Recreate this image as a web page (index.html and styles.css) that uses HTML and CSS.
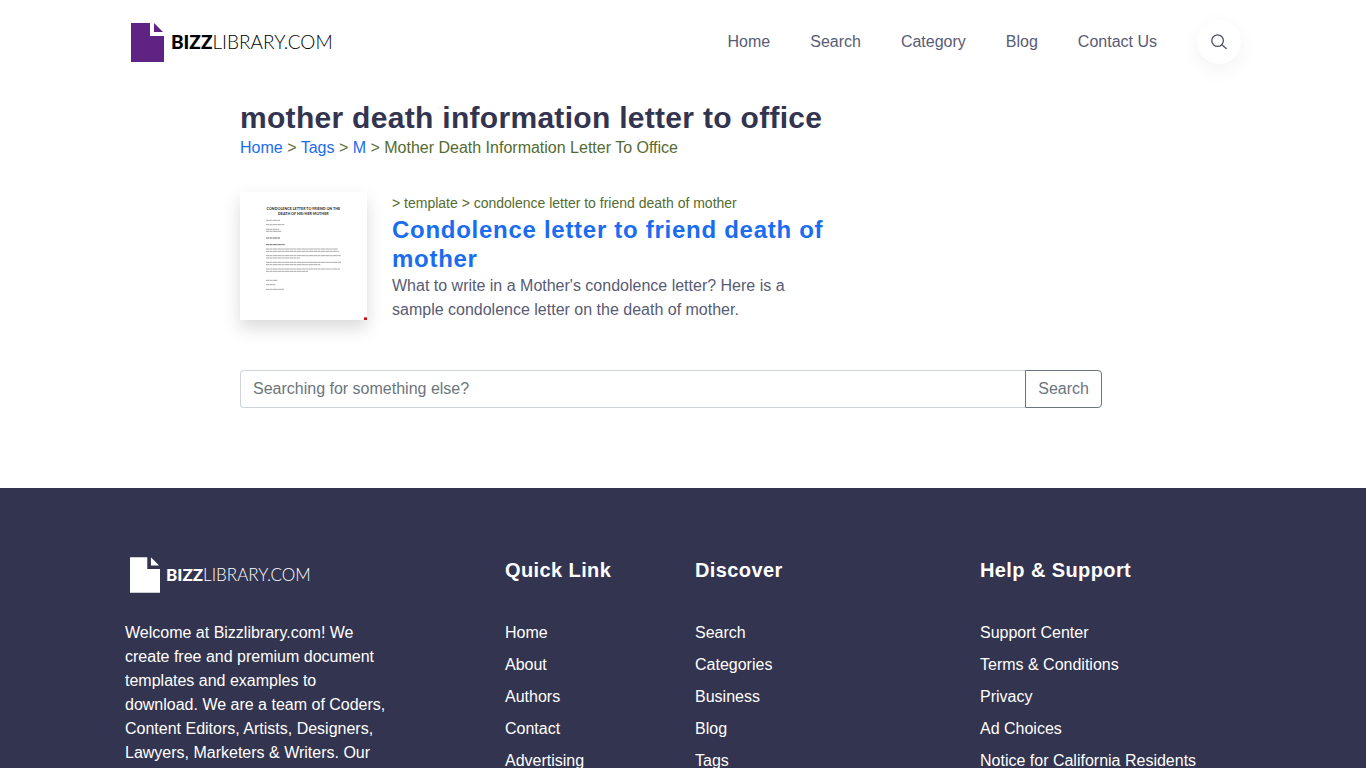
FILE: index.html
```
<!DOCTYPE html>
<html lang="en">
<head>
  <meta charset="UTF-8" />
  <meta name="viewport" content="width=device-width, initial-scale=1.0"/>
  <title>mother death information letter to office</title>
  <link rel="stylesheet" href="styles.css">
</head>
<body>
  <header class="container header">
    <a class="logo" href="#">
      <svg class="logo-icon" viewBox="0 0 33 39" aria-hidden="true">
        <path d="M0 0H19V13H33V39H0Z" fill="currentColor"/>
        <path d="M23 0L32 9H23Z" fill="currentColor"/>
      </svg>
      <span class="logo-text"><b>BIZZ</b>LIBRARY.COM</span>
    </a>
    <nav class="nav">
      <a href="#">Home</a>
      <a href="#">Search</a>
      <a href="#">Category</a>
      <a href="#">Blog</a>
      <a href="#">Contact Us</a>
      <button class="search-toggle" type="button" aria-label="Open search">
        <svg width="16" height="16" viewBox="0 0 16 16" fill="none" stroke="currentColor" stroke-width="1.3" stroke-linecap="round" aria-hidden="true">
          <circle cx="6.6" cy="6.6" r="5.8"/>
          <path d="M10.8 10.8L15.2 14.6"/>
        </svg>
      </button>
    </nav>
  </header>

  <main class="main">
    <h1>mother death information letter to office</h1>
    <div class="breadcrumb">
      <a href="#">Home</a> &gt; <a href="#">Tags</a> &gt; <a href="#">M</a> &gt; Mother Death Information Letter To Office
    </div>

    <article class="result">
      <a class="thumb" href="#" aria-label="Condolence letter to friend death of mother">
        <svg viewBox="0 0 381 384" aria-hidden="true">
          <g class="thumb-title">
            <text x="190" y="53">CONDOLENCE LETTER TO FRIEND ON THE</text>
            <text x="190" y="70">DEATH OF HIS/HER MOTHER</text>
          </g>
          <g class="thumb-lines">
            <path d="M78 85h42M78 98h56M78 112h40M78 118h46"/>
            <path class="dark" d="M78 138h42M78 158h58"/>
            <path d="M78 171h216M78 178h220M78 191h224M78 198h102M78 211h225M78 218h163M78 231h222M78 238h126"/>
            <path d="M78 265h34M78 278h28M78 292h54"/>
          </g>
          <path d="M372 376h9v8h-9z" fill="#c8141e"/>
        </svg>
      </a>
      <div class="result-text">
        <div class="result-path">&gt; template &gt; condolence letter to friend death of mother</div>
        <h2><a href="#">Condolence letter to friend death of mother</a></h2>
        <p>What to write in a Mother's condolence letter? Here is a sample condolence letter on the death of mother.</p>
      </div>
    </article>

    <form class="search-form">
      <input type="text" placeholder="Searching for something else?" aria-label="Searching for something else?">
      <button type="submit">Search</button>
    </form>
  </main>

  <footer>
    <div class="container footer-row">
      <div class="about">
        <a class="logo logo-light" href="#">
          <svg class="logo-icon" viewBox="0 0 33 39" aria-hidden="true">
            <path d="M0 0H19V13H33V39H0Z" fill="currentColor"/>
            <path d="M23 0L32 9H23Z" fill="currentColor"/>
          </svg>
          <span class="logo-text"><b>BIZZ</b>LIBRARY.COM</span>
        </a>
        <p>Welcome at Bizzlibrary.com! We create free and premium document templates and examples to download. We are a team of Coders, Content Editors, Artists, Designers, Lawyers, Marketers &amp; Writers. Our</p>
      </div>
      <div>
        <h5>Quick Link</h5>
        <ul>
          <li><a href="#">Home</a></li>
          <li><a href="#">About</a></li>
          <li><a href="#">Authors</a></li>
          <li><a href="#">Contact</a></li>
          <li><a href="#">Advertising</a></li>
        </ul>
      </div>
      <div>
        <h5>Discover</h5>
        <ul>
          <li><a href="#">Search</a></li>
          <li><a href="#">Categories</a></li>
          <li><a href="#">Business</a></li>
          <li><a href="#">Blog</a></li>
          <li><a href="#">Tags</a></li>
        </ul>
      </div>
      <div>
        <h5>Help &amp; Support</h5>
        <ul>
          <li><a href="#">Support Center</a></li>
          <li><a href="#">Terms &amp; Conditions</a></li>
          <li><a href="#">Privacy</a></li>
          <li><a href="#">Ad Choices</a></li>
          <li><a href="#">Notice for California Residents</a></li>
        </ul>
      </div>
    </div>
  </footer>
</body>
</html>
```

FILE: styles.css
```
* {
  margin: 0;
  padding: 0;
  box-sizing: border-box;
}

body {
  font-family: "Liberation Sans", Arial, sans-serif;
  font-size: 16px;
  line-height: 24px;
  color: #585b75;
  background-color: #fff;
}

a {
  color: #1a6cf0;
  text-decoration: none;
}

h1, h2, h5 {
  font-weight: 700;
}

.container {
  max-width: 1140px;
  margin: 0 auto;
  padding: 0 12px;
}

/* header */
.header {
  display: flex;
  justify-content: space-between;
  align-items: center;
  height: 84px;
}

.logo {
  display: flex;
  align-items: center;
  gap: 7px;
  padding-left: 6px;
  color: #000;
}

.logo-icon {
  width: 33px;
  height: 39px;
  color: #5f2383;
}

.logo-text {
  font-family: Lato, sans-serif;
  font-size: 19px;
  font-weight: 300;
}

.logo-text b {
  font-weight: 900;
}

.nav {
  display: flex;
  align-items: center;
  gap: 40px;
}

.nav a {
  color: #585b75;
}

.search-toggle {
  display: flex;
  justify-content: center;
  align-items: center;
  width: 44px;
  height: 44px;
  border: none;
  border-radius: 50%;
  background-color: #fff;
  color: #50536c;
  box-shadow: 0 6px 20px rgba(0, 0, 0, 0.05);
  cursor: pointer;
}

/* main */
.main {
  max-width: 910px;
  margin: 0 auto;
  padding: 16px 36px 80px 12px;
}

h1 {
  font-size: 30px;
  line-height: 36px;
  letter-spacing: 0.01em;
  color: #33344f;
}

.breadcrumb,
.result-path {
  color: #556b2f;
}

.result {
  display: flex;
  gap: 25px;
  margin: 32px 0 48px;
}

.thumb {
  flex: none;
  width: 127px;
  height: 128px;
  background-color: #fff;
  box-shadow: 0 8px 16px rgba(0, 0, 0, 0.15);
}

.thumb svg {
  display: block;
  width: 100%;
  height: 100%;
}

.thumb-title {
  font-family: Lato, sans-serif;
  font-size: 11px;
  font-weight: 900;
  text-anchor: middle;
  fill: #333;
}

.thumb-lines {
  fill: none;
  stroke: #aaa;
  stroke-width: 3;
  stroke-dasharray: 11 1 7 1 15 1;
}

.thumb-lines .dark {
  stroke: #777;
}

.result-text {
  max-width: 440px;
}

.result-path {
  font-size: 14px;
  line-height: 23px;
}

h2 {
  margin-bottom: 1px;
  font-size: 24px;
  line-height: 29px;
  letter-spacing: 0.03em;
}

.search-form {
  display: flex;
}

.search-form input,
.search-form button {
  height: 38px;
  padding: 6px 12px;
  font: inherit;
  background-color: #fff;
}

.search-form input {
  flex: 1;
  min-width: 0;
  border: 1px solid #ced4da;
  border-right: none;
  border-radius: 4px 0 0 4px;
}

.search-form input::placeholder {
  color: #6c757d;
}

.search-form button {
  border: 1px solid #6c757d;
  border-radius: 0 4px 4px 0;
  color: #6c757d;
  cursor: pointer;
}

/* footer */
footer {
  padding: 68px 0;
  background-color: #33344f;
  color: #fff;
}

footer a {
  color: #fff;
}

.footer-row {
  display: grid;
  grid-template-columns: 4fr 2fr 3fr 3fr;
  padding: 0;
}

.footer-row > div {
  padding-left: 12px;
}

.about p {
  max-width: 261px;
  margin-top: 27px;
}

.logo-light {
  gap: 6px;
  padding-left: 5px;
  color: #fff;
}

.logo-light .logo-icon {
  width: 30px;
  height: 38px;
  color: #fff;
}

.logo-light .logo-text {
  font-size: 17px;
}

h5 {
  margin-bottom: 37px;
  font-size: 20px;
  line-height: 28px;
  letter-spacing: 0.02em;
}

ul {
  list-style: none;
}

li {
  margin-bottom: 8px;
}
```
